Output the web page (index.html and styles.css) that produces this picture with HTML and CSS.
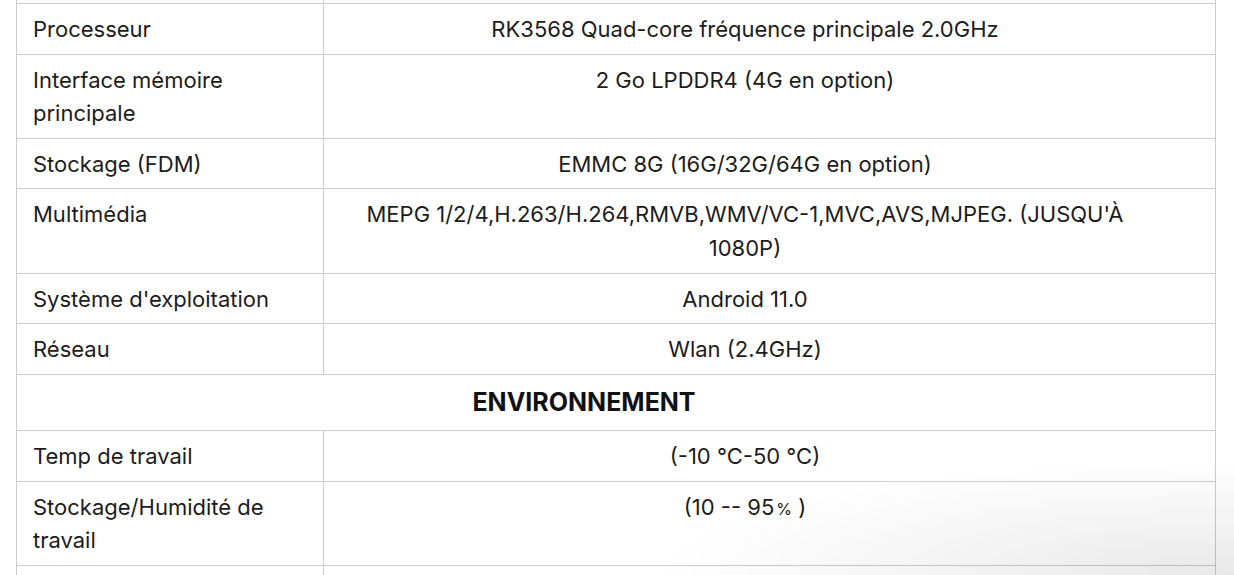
FILE: index.html
```html
<!DOCTYPE html>
<html lang="fr">
<head>
<meta charset="utf-8">
<title>Spécifications</title>
<link rel="stylesheet" href="styles.css">
</head>
<body>
<div class="page">
  <table class="specs">
    <colgroup><col class="c-label"><col class="c-value"></colgroup>
    <tbody>
      <tr class="cut"><td></td><td></td></tr>
      <tr><td>Processeur</td><td>RK3568 Quad-core fréquence principale 2.0GHz</td></tr>
      <tr><td>Interface mémoire principale</td><td>2 Go LPDDR4 (4G en option)</td></tr>
      <tr><td>Stockage (FDM)</td><td>EMMC 8G (16G/32G/64G en option)</td></tr>
      <tr><td>Multimédia</td><td>MEPG 1/2/4,H.263/H.264,RMVB,WMV/VC-1,MVC,AVS,MJPEG. (JUSQU'À 1080P)</td></tr>
      <tr><td>Système d'exploitation</td><td>Android 11.0</td></tr>
      <tr><td>Réseau</td><td>Wlan (2.4GHz)</td></tr>
      <tr class="section"><th colspan="2">ENVIRONNEMENT</th></tr>
      <tr><td>Temp de travail</td><td>(-10 °C-50 °C)</td></tr>
      <tr><td>Stockage/Humidité de travail</td><td>(10 -- 95<span class="pct">%</span> )</td></tr>
      <tr class="cut"><td></td><td></td></tr>
    </tbody>
  </table>
</div>
<div class="corner-shadow"></div>
</body>
</html>
```
FILE: styles.css
```css
html, body {
  margin: 0;
  padding: 0;
  background: #fff;
  overflow: hidden;
  height: 575px;
}
body {
  font-family: Inter, "Noto Sans", sans-serif;
  color: #1c1c1c;
  font-size: 22px;
  line-height: 33.6px;
}
.page {
  padding-left: 16px;
  margin-top: -47.6px;
}
.specs {
  width: 1200px;
  border-collapse: collapse;
  table-layout: fixed;
}
.c-label { width: 307px; }
.specs td, .specs th {
  border: 1px solid #cccccc;
  padding: 9px 16px 7px;
  vertical-align: top;
}
.specs .cut td {
  height: 33.6px;
}
.specs td:first-child {
  text-align: left;
}
.specs td + td {
  text-align: center;
  padding-left: 16px;
  padding-right: 65px;
}
.specs .section th {
  font-size: 25px;
  font-weight: 700;
  line-height: 34px;
  padding: 10px 80px 11.2px 16px;
  color: #111;
  text-align: center;
}
.pct { font-size: 16px; margin-left: 2px; }
.corner-shadow {
  position: fixed;
  right: 0;
  bottom: 0;
  width: 580px;
  height: 130px;
  pointer-events: none;
  background: radial-gradient(ellipse 580px 115px at 100% 100%, rgba(0,0,0,0.09), rgba(0,0,0,0.04) 55%, rgba(0,0,0,0) 100%);
}
```
